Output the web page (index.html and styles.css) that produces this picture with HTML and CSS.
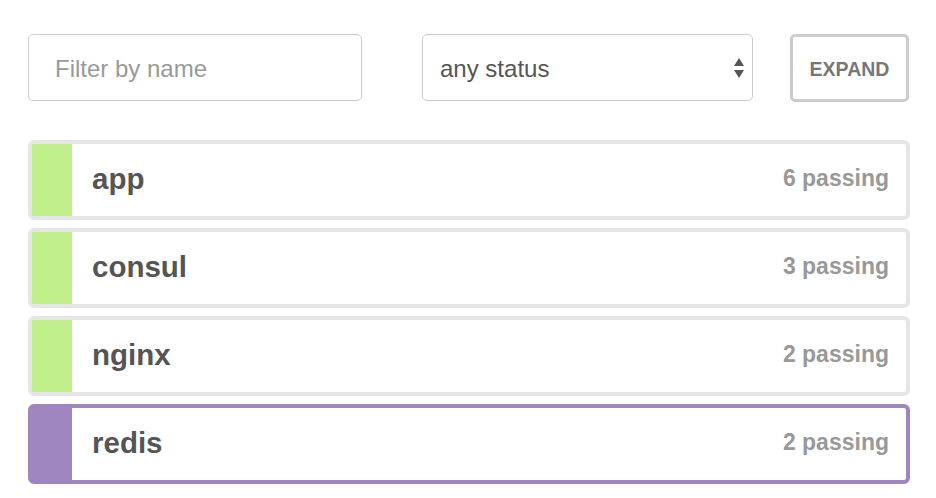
FILE: index.html
```html
<!DOCTYPE html>
<html>
<head>
<meta charset="utf-8">
<link rel="stylesheet" href="styles.css">
</head>
<body>
<div class="page">
  <div class="controls">
    <input class="filter" type="text" placeholder="Filter by name">
    <div class="select">
      <span class="select-text">any status</span>
      <svg class="arrows" width="10" height="22" viewBox="0 0 10 22">
        <polygon points="5,0 10,8 0,8" fill="#555"/>
        <polygon points="0,12 10,12 5,20" fill="#555"/>
      </svg>
    </div>
    <button class="expand">EXPAND</button>
  </div>
  <div class="list">
    <div class="row">
      <div class="bar passing"></div>
      <div class="name">app</div>
      <div class="count">6 passing</div>
    </div>
    <div class="row">
      <div class="bar passing"></div>
      <div class="name">consul</div>
      <div class="count">3 passing</div>
    </div>
    <div class="row">
      <div class="bar passing"></div>
      <div class="name">nginx</div>
      <div class="count">2 passing</div>
    </div>
    <div class="row active">
      <div class="bar selected"></div>
      <div class="name">redis</div>
      <div class="count">2 passing</div>
    </div>
  </div>
</div>
</body>
</html>
```

FILE: styles.css
```css
html, body {
  margin: 0;
  padding: 0;
  background: #ffffff;
}

body {
  font-family: "Liberation Sans", Arial, Helvetica, sans-serif;
}

.page {
  padding: 34px 26px 0 28px;
  width: 882px;
}

.controls {
  display: flex;
  align-items: stretch;
  height: 67px;
}

.filter {
  box-sizing: border-box;
  width: 334px;
  height: 67px;
  margin: 0;
  border: 1px solid #cccccc;
  border-radius: 5px;
  padding: 2px 0 0 26px;
  font-family: "Liberation Sans", Arial, sans-serif;
  font-size: 24px;
  color: #555555;
  outline: none;
}

.filter::placeholder {
  color: #999999;
}

.select {
  box-sizing: border-box;
  width: 331px;
  height: 67px;
  margin-left: 60px;
  border: 1px solid #cccccc;
  border-radius: 5px;
  display: flex;
  align-items: center;
  justify-content: space-between;
  padding: 2px 8px 0 17px;
}

.select-text {
  font-size: 24px;
  color: #555555;
}

.arrows {
  display: block;
  margin-top: 1px;
}

.expand {
  box-sizing: border-box;
  width: 119px;
  height: 68px;
  margin: 0 0 0 37px;
  padding: 2px 0 0 0;
  background: #ffffff;
  border: 3px solid #cccccc;
  border-radius: 5px;
  font-family: "Liberation Sans", Arial, sans-serif;
  font-weight: bold;
  font-size: 19.5px;
  color: #777777;
  cursor: pointer;
}

.list {
  margin-top: 39px;
  display: flex;
  flex-direction: column;
  gap: 8px;
}

.row {
  box-sizing: border-box;
  height: 80px;
  padding-bottom: 3px;
  border: 4px solid #e6e6e6;
  border-radius: 6px;
  display: flex;
  align-items: center;
  background: #ffffff;
}

.row.active {
  border-color: #a086c1;
}

.bar {
  align-self: stretch;
  margin-bottom: -3px;
  width: 40px;
  flex: none;
}

.bar.passing {
  background: #c0ee8b;
}

.bar.selected {
  background: #a086c1;
}

.name {
  margin-left: 20px;
  font-weight: bold;
  font-size: 29.5px;
  color: #555555;
  flex: 1;
}

.count {
  margin-right: 17px;
  font-weight: bold;
  font-size: 23px;
  color: #999999;
}
```
